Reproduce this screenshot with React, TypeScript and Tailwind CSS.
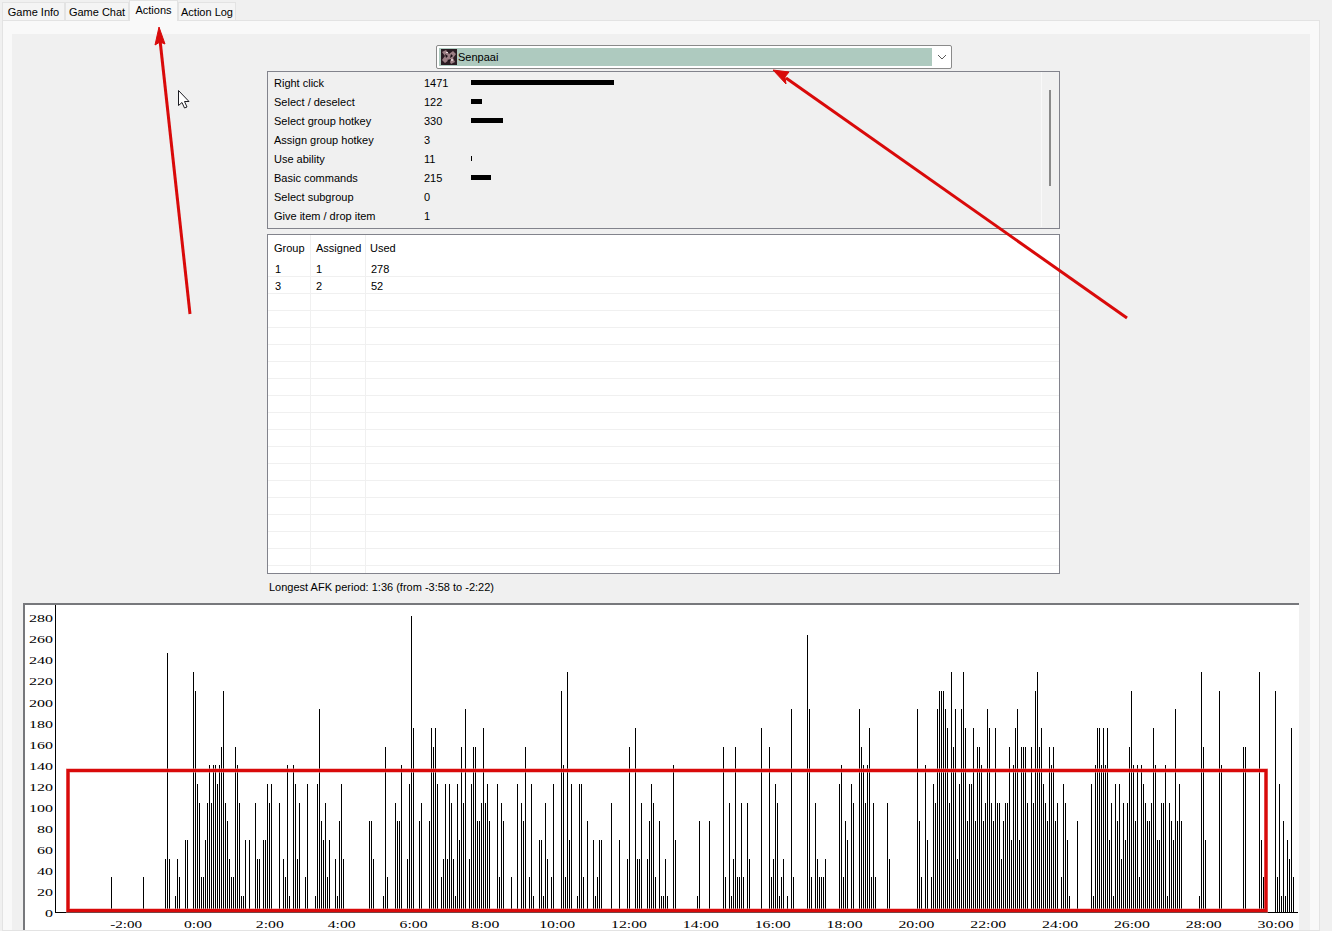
const tabs = [
  { label: "Game Info", w: "w-[63px]" },
  { label: "Game Chat", w: "w-[64px]" },
  { label: "Actions", w: "w-[49px]", active: true },
  { label: "Action Log", w: "w-[58px]" },
];

const stats = [
  { label: "Right click", value: 1471, bar: 143 },
  { label: "Select / deselect", value: 122, bar: 11 },
  { label: "Select group hotkey", value: 330, bar: 32 },
  { label: "Assign group hotkey", value: 3, bar: 0 },
  { label: "Use ability", value: 11, bar: 1 },
  { label: "Basic commands", value: 215, bar: 20 },
  { label: "Select subgroup", value: 0, bar: 0 },
  { label: "Give item / drop item", value: 1, bar: 0 },
];

const groups = [
  { group: "1", assigned: "1", used: "278" },
  { group: "3", assigned: "2", used: "52" },
];

// [offset in the 3x crop, level] read off the reference, one list per stretch of the chart
const barsA: number[][] = [[334,2],[430,2],[496,3],[502,14],[508,3],[526,1],[532,3],[538,2],[556,4],[562,4],[580,13],[586,12],[592,7],[598,6],[604,2],[610,2],[616,4],[622,6],[628,8],[634,6],[640,8],[646,8],[652,7],[658,8],[664,9],[670,12],[676,6],[682,5],[688,3],[694,2],[700,2],[706,9],[712,8],[718,6],[724,1],[730,1],[736,4],[748,4],[766,6],[772,3],[778,3],[790,4],[796,4],[802,7],[808,6],[814,7],[838,6],[850,3],[856,2],[862,8],[868,1],[880,8],[886,7],[892,3],[898,6],[916,2],[922,7],[946,1],[952,7],[958,11],[964,5],[970,4],[976,6],[982,2],[988,4],[1006,3],[1012,1],[1018,5],[1024,7],[1030,3],[1108,5],[1114,5],[1120,3],[1150,1],[1156,9],[1162,2],[1186,6],[1192,5],[1198,5],[1204,8],[1222,3],[1228,7],[1234,16],[1240,10],[1258,5],[1264,6],[1288,5],[1294,10],[1300,9],[1306,10],[1312,7]];
const barsB: number[][] = [[4,2],[10,3],[16,7],[22,3],[28,7],[34,6],[40,3],[46,1],[52,7],[58,4],[64,9],[70,6],[76,11],[88,3],[94,7],[100,9],[106,9],[112,5],[118,5],[124,6],[130,10],[136,6],[142,7],[148,5],[172,7],[178,2],[184,6],[190,5],[214,2],[232,7],[244,6],[250,5],[256,9],[268,2],[274,7],[280,1],[298,4],[304,4],[310,1],[316,6],[322,3],[334,2],[340,7],[364,12],[370,8],[376,2],[382,13],[388,4],[394,7],[412,1],[418,7],[424,7],[430,2],[442,5],[460,4],[466,1],[472,2],[478,4],[484,4],[514,6],[538,4],[562,3],[568,9],[586,10],[592,3],[598,3],[604,6],[622,3],[628,5],[634,7],[640,6],[646,2],[658,5],[664,1],[670,1],[676,3],[682,1],[700,8],[706,4],[772,1],[778,5],[808,5],[850,9],[856,2],[868,6],[874,1],[880,3],[886,9],[892,2],[898,2],[904,6],[910,2],[922,6],[928,3],[964,10],[988,9],[994,2],[1000,3],[1006,7],[1012,6],[1018,1],[1024,2],[1030,3],[1042,1],[1054,11],[1060,2],[1102,15],[1108,11],[1114,2],[1126,6],[1132,3],[1138,2],[1144,2],[1150,2],[1156,3],[1198,7],[1204,8],[1210,2],[1216,5],[1222,4],[1234,7],[1240,6],[1258,11],[1264,9],[1270,8],[1276,6],[1282,8],[1288,10],[1294,2],[1300,6],[1306,2]];
const barsC: number[][] = [[22,6],[28,3],[112,11],[118,5],[124,2],[136,8],[142,4],[154,2],[160,7],[166,6],[172,11],[178,12],[184,12],[190,12],[196,11],[202,10],[208,6],[214,13],[220,9],[226,11],[232,3],[238,7],[244,11],[250,13],[256,10],[262,5],[268,7],[274,7],[280,10],[286,5],[292,9],[298,9],[304,8],[310,5],[316,6],[322,11],[328,10],[334,6],[340,5],[346,10],[352,6],[358,6],[364,3],[370,5],[376,6],[382,6],[388,9],[394,4],[400,8],[406,10],[412,11],[418,4],[424,9],[430,9],[436,9],[442,6],[454,9],[460,6],[466,12],[472,13],[478,9],[484,10],[490,7],[496,6],[502,5],[508,9],[514,8],[520,9],[526,5],[532,6],[544,2],[550,7],[556,6],[562,4],[568,1],[592,5],[634,7],[640,1],[646,8],[652,10],[658,10],[664,8],[670,10],[676,8],[682,10],[688,4],[694,6],[700,1],[706,7],[712,5],[718,7],[724,3],[730,6],[736,4],[742,6],[748,9],[754,12],[760,8],[766,5],[772,8],[778,2],[784,8],[790,7],[796,6],[802,5],[808,5],[814,6],[820,10],[826,8],[832,4],[838,4],[844,6],[850,6],[856,8],[862,1],[868,6],[874,5],[880,4],[886,11],[892,5],[898,7],[904,5],[958,1],[964,13],[970,9],[976,4],[1018,12],[1024,8],[1090,9],[1096,9],[1138,13],[1144,4],[1150,2],[1186,12],[1192,2],[1198,7],[1204,1],[1210,5],[1216,1],[1222,4],[1228,3],[1234,10],[1240,2]];

const toBars = (list: number[][], base: number) =>
  list.map(([z, level]) => ({
    x: base + Math.floor(z / 3),
    h: Math.round(16 + (level - 1) * 18.67),
  }));

const chartBars = [...toBars(barsA, 0), ...toBars(barsB, 440), ...toBars(barsC, 880)];

const yTicks = Array.from({ length: 15 }, (_, i) => i * 20);
const xTicks = Array.from({ length: 17 }, (_, i) => -2 + i * 2);

const fmtTick = (h: number) => `${h}:00`;

const Tabs = () => (
  <div className="flex h-[20px] shrink-0 items-end whitespace-nowrap pl-[2px]">
    {tabs.map((t) =>
      t.active ? (
        <div
          key={t.label}
          className={`${t.w} relative z-10 -mb-[1px] flex h-[21px] items-start justify-center border-x border-t border-[#e3e3e3] bg-[#f9f9f9] pt-[2px] text-[11px] leading-[14px]`}
        >
          {t.label}
        </div>
      ) : (
        <div
          key={t.label}
          className={`${t.w} flex h-[18px] items-center justify-center border-t border-r border-l border-[#e3e3e3] bg-[#f4f4f4] pt-[1px] text-[11px] leading-[14px]`}
        >
          {t.label}
        </div>
      )
    )}
  </div>
);

const PlayerSelect = () => (
  <div className="ml-[424px] mt-[11px] flex h-[24px] w-[516px] shrink-0 items-center rounded-[2px] border border-[#8a8a8a] bg-white pl-[2px]">
    <div className="flex h-[18px] w-[493px] items-center bg-[#aecabf] pl-[2px]">
      <svg width="16" height="16" viewBox="0 0 16 16" className="shrink-0">
        <rect width="16" height="16" fill="#2a1c22" />
        <path d="M1 3l4-2 3 4 4-3 3 3-3 4 2 4-4 2-2-4-4 3-3-3 3-4z" fill="#9c7f84" />
        <path d="M4 5l3 2-2 2zM10 5l2 2-3 2zM6 11l4-1-1 3z" fill="#1a1015" />
        <rect x="5" y="3" width="2" height="1" fill="#e6d9da" />
        <rect x="10" y="10" width="2" height="2" fill="#d8c6c8" />
      </svg>
      <span className="ml-[1px] text-[11px] leading-[14px]">Senpaai</span>
    </div>
    <div className="flex flex-1 items-center justify-center">
      <svg width="10" height="6" viewBox="0 0 10 6" fill="none">
        <path d="M1 1l4 4 4-4" stroke="#5a5a5a" strokeWidth="1" />
      </svg>
    </div>
  </div>
);

const StatsBox = () => (
  <div className="ml-[255px] mt-[2px] flex h-[158px] w-[793px] shrink-0 border border-[#82838c] pt-[2px]">
    <div className="flex-1">
      {stats.map((s) => (
        <div key={s.label} className="flex h-[19px] items-center text-[11px]">
          <span className="w-[156px] pl-[6px]">{s.label}</span>
          <span className="w-[47px]">{s.value}</span>
          {s.bar > 0 && <div className="mb-[3px] h-[5px] bg-black" style={{ width: s.bar }} />}
        </div>
      ))}
    </div>
    <div className="-mt-[2px] mb-[1px] flex w-[18px] justify-start border-l border-[#f9f9f9] pl-[7px] pt-[18px]">
      <div className="h-[96px] w-[2px] bg-[#8a8a8a]" />
    </div>
  </div>
);

const GroupTable = () => (
  <div className="ml-[255px] mt-[5px] h-[340px] w-[793px] shrink-0 overflow-hidden border border-[#82838c] bg-white text-[11px]">
    <div className="flex h-[25px] items-center">
      <span className="flex h-full w-[43px] items-center border-r border-[#f0f0f0] pl-[6px] pt-[1px]">Group</span>
      <span className="flex h-full w-[55px] items-center border-r border-[#f0f0f0] pl-[5px] pt-[1px]">Assigned</span>
      <span className="pl-[4px] pt-[1px]">Used</span>
    </div>
    {Array.from({ length: 19 }, (_, i) => (
      <div key={i} className="flex h-[17px] items-center border-b border-[#f0f0f0]">
        <span className="flex h-[17px] w-[43px] items-center border-r border-[#f0f0f0] pl-[7px] pt-[3px]">{groups[i]?.group}</span>
        <span className="flex h-[17px] w-[55px] items-center border-r border-[#f0f0f0] pl-[5px] pt-[3px]">{groups[i]?.assigned}</span>
        <span className="flex h-[17px] items-center pl-[5px] pt-[3px]">{groups[i]?.used}</span>
      </div>
    ))}
  </div>
);

const ActivityChart = () => (
  <div className="ml-[11px] mt-[3px] h-[330px] w-[1276px] shrink-0 overflow-hidden border-l-2 border-t-2 border-[#77787c] bg-white">
    <svg width="1274" height="326" viewBox="25 605 1274 326" fontFamily="'Liberation Serif', serif" fontSize="11" fontWeight="500">
      <line x1="55.5" y1="605" x2="55.5" y2="913" stroke="#000" />
      <line x1="55" y1="912.5" x2="1298" y2="912.5" stroke="#000" />
      {chartBars.map((b) => (
        <rect key={b.x} x={b.x} y={912 - b.h} width="1" height={b.h} fill="#000" />
      ))}
      {yTicks.map((v) => (
        <text
          key={v}
          x="53"
          y={917 - v * 1.0525}
          textAnchor="end"
          textLength={v === 0 ? 8 : v < 100 ? 16 : 24}
          lengthAdjust="spacingAndGlyphs"
        >
          {v}
        </text>
      ))}
      {xTicks.map((m) => (
        <text
          key={m}
          x={198 + m * 35.92}
          y="928"
          textAnchor="middle"
          textLength={m < 0 ? 32 : m < 10 ? 28 : 36}
          lengthAdjust="spacingAndGlyphs"
        >
          {fmtTick(m)}
        </text>
      ))}
    </svg>
  </div>
);

// the red marks someone drew on top of the screenshot, plus the mouse pointer
const Annotations = () => (
  <svg className="pointer-events-none absolute inset-0 z-20" width="1332" height="931" viewBox="0 0 1332 931" fill="none">
    <rect x="68" y="770.5" width="1198" height="140" stroke="#e98a8a" strokeWidth="4" />
    <rect x="68" y="770.5" width="1198" height="140" stroke="#d90a0a" strokeWidth="3" />
    <line x1="190" y1="314" x2="160" y2="40" stroke="#d90a0a" strokeWidth="3" />
    <path d="M159 27l6 17-5-2-5 3z" fill="#d90a0a" stroke="#d90a0a" />
    <line x1="1127" y1="318" x2="786" y2="78" stroke="#d90a0a" strokeWidth="3" />
    <path d="M773 70l16 2-4 5 1 7z" fill="#d90a0a" stroke="#d90a0a" />
    <path
      d="M178.5 90.5v15l3.5-3 2.5 5.500 2.500-1-2.500-5.500h4.500z"
      fill="#fff"
      stroke="#1c1c22"
      strokeWidth="1"
    />
  </svg>
);

export default function App() {
  return (
    <div className="relative flex h-[931px] w-[1332px] flex-col overflow-hidden bg-[#f0f0f0] font-['Liberation_Sans',sans-serif] text-black">
      <Tabs />
      <div className="ml-[2px] flex min-h-0 w-[1318px] flex-1 flex-col border border-[#e3e3e3] bg-[#f9f9f9] px-[9px] pt-[13px]">
        <div className="flex h-full w-[1298px] flex-col overflow-hidden bg-[#f0f0f0]">
          <PlayerSelect />
          <StatsBox />
          <GroupTable />
          <div className="ml-[257px] h-[26px] shrink-0 pt-[6px] text-[11px] leading-[14px]">
            Longest AFK period: 1:36 (from -3:58 to -2:22)
          </div>
          <ActivityChart />
        </div>
      </div>
      <Annotations />
    </div>
  );
}
